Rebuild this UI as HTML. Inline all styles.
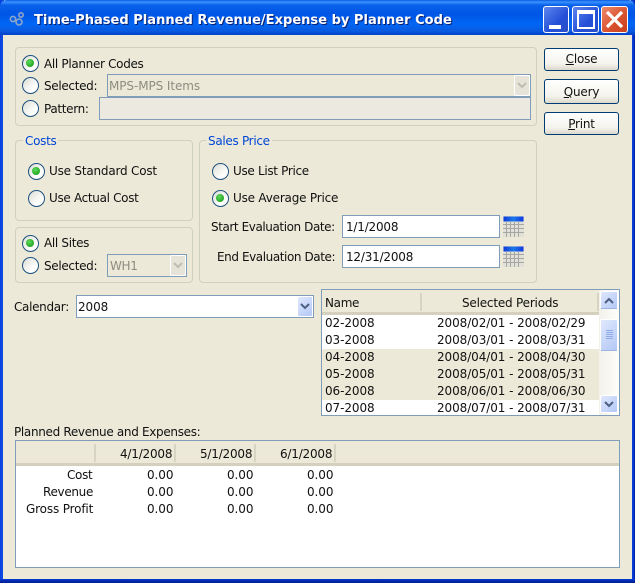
<!DOCTYPE html>
<html><head><meta charset="utf-8">
<style>
html,body{margin:0;padding:0;background:#ece9d8}
#w{position:relative;width:635px;height:583px;overflow:hidden;background:#ece9d8;font:12px "DejaVu Sans",sans-serif;color:#111}
#w *{box-sizing:border-box}
.a,.t,.g,.r,.i,.b{position:absolute}
.t{white-space:pre;line-height:16px;height:16px;font-size:12px;letter-spacing:-.32px;margin-top:1px}
.n{letter-spacing:-.08px}
.u{margin-top:0}
.g{border:1px solid #d0d0bf;border-radius:4px}
.gl{position:absolute;white-space:pre;color:#0046d5;background:#ece9d8;line-height:14px;padding:0 2px;font-size:12px;letter-spacing:-.3px}
.r{width:17px;height:17px;border-radius:50%;border:1.5px solid #1c5180;background:linear-gradient(135deg,#dcdcd4,#fff 70%)}
.r.on::after{content:"";position:absolute;left:3px;top:3px;width:8px;height:8px;border-radius:50%;background:radial-gradient(circle at 40% 35%,#5fd85f,#1ea61e 75%)}
.i{border:1px solid #7f9db9;background:#fff}
.i.d{background:#ebe9e0}
.b{border:1px solid #003c74;border-radius:3px;background:linear-gradient(#fff,#f4f3ec 70%,#dcd8cc);text-align:center;line-height:21px;font-size:12px;letter-spacing:-.2px}
.arr{position:absolute;border-radius:2px;background:linear-gradient(135deg,#dfe8fd,#b4c8f6);border:1px solid #fff}
.grey{color:#8c8c80}
</style></head><body>
<div id="w">
<!-- frame -->
<div class="a" style="left:0;top:0;width:635px;height:583px;background:linear-gradient(90deg,#0a3cd8,#0a50e8 2px,#0a3cd8 4px,transparent 4px,transparent 631px,#0a40dc 631px,#0a3cd8 633px,#0020a0)"></div>
<div class="a" style="left:3px;top:34px;width:629px;height:546px;background:#ece9d8"></div>
<div class="a" style="left:0;top:579px;width:635px;height:4px;background:linear-gradient(#0a40d8,#0030c0 1px,#001c8c)"></div>
<div class="a" style="left:0;top:0;width:635px;height:35px;border-radius:7px 7px 0 0;background:linear-gradient(#0a5ae0,#3a93ff 2px,#0a62ea 5px,#0055e5 14px,#0066f4 24px,#0a5ae0 31px,#0040c8 35px)"></div>
<!-- title icon -->
<svg class="a" style="left:9px;top:12px" width="17" height="15" viewBox="0 0 17 15" fill="none" stroke="#8ea6c8" stroke-width="1.6"><circle cx="4" cy="7" r="2.6"/><circle cx="10" cy="10" r="3"/><circle cx="12" cy="3" r="2.2"/></svg>
<div class="a" style="left:35px;top:14px;white-space:pre;font:bold 13.04px/16px 'DejaVu Sans',sans-serif;color:#0a1f70;">Time-Phased Planned Revenue/Expense by Planner Code</div>
<div class="a" style="left:34px;top:13px;white-space:pre;font:bold 13.04px/16px 'DejaVu Sans',sans-serif;color:#fff;">Time-Phased Planned Revenue/Expense by Planner Code</div>
<!-- window buttons -->
<div class="a" style="left:543px;top:6px;width:26px;height:27px;border:1px solid #fff;border-radius:3px;background:linear-gradient(135deg,#5f86ee,#2350d8 60%,#2a4fc8)"><div class="a" style="left:5px;top:18px;width:12px;height:4px;background:#fff"></div></div>
<div class="a" style="left:572px;top:6px;width:27px;height:27px;border:1px solid #fff;border-radius:3px;background:linear-gradient(135deg,#5f86ee,#2350d8 60%,#2a4fc8)"><div class="a" style="left:4px;top:3px;width:18px;height:19px;border:2px solid #fff;border-top-width:4px"></div></div>
<div class="a" style="left:601px;top:6px;width:27px;height:27px;border:1px solid #fff;border-radius:3px;background:linear-gradient(135deg,#ec8a6a,#d8502c 60%,#c8401c)"><svg class="a" style="left:3px;top:3px" width="19" height="19" viewBox="0 0 19 19"><path d="M2 2L17 17M17 2L2 17" stroke="#fff" stroke-width="3.2"/></svg></div>

<!-- planner group -->
<div class="g" style="left:15px;top:47px;width:522px;height:79px"></div>
<div class="r on" style="left:22px;top:55px"></div><div class="t" style="left:44px;top:55px">All Planner Codes</div>
<div class="r" style="left:22px;top:77px"></div><div class="t" style="left:44px;top:77px">Selected:</div>
<div class="r" style="left:22px;top:100px"></div><div class="t" style="left:44px;top:100px">Pattern:</div>
<div class="i" style="left:107px;top:74px;width:424px;height:23px;background:#ece9d8"></div>
<div class="t grey n" style="left:109px;top:77px">MPS-MPS Items</div>
<div class="arr" style="left:514px;top:75px;width:16px;height:21px;background:#e6e4d8"><svg class="a" style="left:2px;top:6px" width="10" height="7" viewBox="0 0 10 7"><path d="M1 1L5 5L9 1" stroke="#bdbdb2" stroke-width="2" fill="none"/></svg></div>
<div class="i d" style="left:99px;top:97px;width:432px;height:23px"></div>

<!-- buttons -->
<div class="b" style="left:544px;top:48px;width:75px;height:23px"><u>C</u>lose</div>
<div class="b" style="left:544px;top:79px;width:75px;height:25px;line-height:25px"><u>Q</u>uery</div>
<div class="b" style="left:544px;top:112px;width:75px;height:23px;line-height:22px"><u>P</u>rint</div>

<!-- costs -->
<div class="g" style="left:15px;top:140px;width:178px;height:81px"></div>
<div class="gl" style="left:23px;top:134px">Costs</div>
<div class="r on" style="left:28px;top:163px"></div><div class="t u" style="left:49px;top:163px;letter-spacing:-.2px">Use Standard Cost</div>
<div class="r" style="left:28px;top:190px"></div><div class="t u" style="left:49px;top:190px">Use Actual Cost</div>

<!-- sites -->
<div class="g" style="left:15px;top:227px;width:178px;height:56px"></div>
<div class="r on" style="left:22px;top:235px"></div><div class="t u" style="left:44px;top:235px">All Sites</div>
<div class="r" style="left:22px;top:257px"></div><div class="t" style="left:44px;top:257px">Selected:</div>
<div class="i" style="left:107px;top:254px;width:80px;height:23px;background:#ece9d8"></div>
<div class="t grey" style="left:110px;top:257px">WH1</div>
<div class="arr" style="left:170px;top:255px;width:16px;height:21px;background:#e6e4d8"><svg class="a" style="left:2px;top:6px" width="10" height="7" viewBox="0 0 10 7"><path d="M1 1L5 5L9 1" stroke="#bdbdb2" stroke-width="2" fill="none"/></svg></div>

<!-- sales -->
<div class="g" style="left:199px;top:140px;width:338px;height:143px"></div>
<div class="gl" style="left:206px;top:134px">Sales Price</div>
<div class="r" style="left:212px;top:163px"></div><div class="t u" style="left:233px;top:163px">Use List Price</div>
<div class="r on" style="left:212px;top:190px"></div><div class="t u" style="left:233px;top:190px;letter-spacing:-.2px">Use Average Price</div>
<div class="t u" style="left:211px;top:219px;letter-spacing:-.42px">Start Evaluation Date:</div>
<div class="t u" style="left:217px;top:249px;letter-spacing:-.42px">End Evaluation Date:</div>
<div class="i" style="left:342px;top:215px;width:158px;height:23px"></div><div class="t u" style="left:346px;top:219px;letter-spacing:-.2px">1/1/2008</div>
<div class="i" style="left:342px;top:245px;width:158px;height:23px"></div><div class="t u" style="left:346px;top:249px;letter-spacing:-.2px">12/31/2008</div>
<svg class="a" style="left:503px;top:216px" width="21" height="21" viewBox="0 0 21 21"><defs><linearGradient id="cg"><stop offset="0" stop-color="#1038d8"/><stop offset=".5" stop-color="#1c7ae8"/><stop offset="1" stop-color="#1038e0"/></linearGradient></defs><rect width="21" height="21" fill="#e2e1d8"/><rect x="0.5" y="0.5" width="20" height="5" fill="url(#cg)"/><path d="M0 8.5H21M0 12.5H21M0 16.5H21M3.5 6V21M7.5 6V21M11.5 6V21M15.5 6V21" stroke="#a6a6a2" stroke-width="1"/></svg>
<svg class="a" style="left:503px;top:246px" width="21" height="21" viewBox="0 0 21 21"><rect width="21" height="21" fill="#e2e1d8"/><rect x="0.5" y="0.5" width="20" height="5" fill="url(#cg)"/><path d="M0 8.5H21M0 12.5H21M0 16.5H21M3.5 6V21M7.5 6V21M11.5 6V21M15.5 6V21" stroke="#a6a6a2" stroke-width="1"/></svg>

<!-- calendar -->
<div class="t" style="left:14px;top:298px">Calendar:</div>
<div class="i" style="left:76px;top:295px;width:238px;height:23px"></div>
<div class="t n" style="left:78px;top:298px">2008</div>
<div class="arr" style="left:297px;top:296px;width:16px;height:21px"><svg class="a" style="left:2px;top:6px" width="10" height="7" viewBox="0 0 10 7"><path d="M1 1L5 5L9 1" stroke="#4d6185" stroke-width="2" fill="none"/></svg></div>

<!-- list -->
<div class="i" style="left:321px;top:289px;width:299px;height:127px;overflow:hidden">
 <div class="a" style="left:0;top:0;width:277px;height:25px;background:#ece9d8;border-bottom:3px solid #d5d0bd"></div>
 <div class="a" style="left:98px;top:3px;width:2px;height:18px;background:#d8d4c4"></div>
 <div class="a" style="left:275px;top:3px;width:2px;height:18px;background:#d8d4c4"></div>
 <div class="a" style="left:0;top:25px;width:277px;height:34px;background:#fff"></div>
 <div class="a" style="left:0;top:59px;width:277px;height:51px;background:#ece9d8"></div>
 <div class="a" style="left:0;top:110px;width:277px;height:16px;background:#fff"></div>
 <div class="a" style="left:277px;top:0;width:20px;height:125px;background:linear-gradient(90deg,#f2f1ea,#fefefb)"></div>
 <div class="arr" style="left:278px;top:1px;width:18px;height:18px;border-bottom:1px solid #9cb4e0"><svg class="a" style="left:3px;top:5px" width="10" height="7" viewBox="0 0 10 7"><path d="M1 6L5 2L9 6" stroke="#4d6185" stroke-width="2" fill="none"/></svg></div>
 <div class="arr" style="left:278px;top:29px;width:18px;height:32px;border-bottom:1px solid #9cb4e0"><svg class="a" style="left:4px;top:9px" width="9" height="11" viewBox="0 0 9 11"><path d="M1 1.5H8M1 3.5H8M1 5.5H8M1 7.5H8M1 9.5H8" stroke="#8faae6" stroke-width="1"/></svg></div>
 <div class="arr" style="left:278px;top:105px;width:18px;height:18px"><svg class="a" style="left:3px;top:5px" width="10" height="7" viewBox="0 0 10 7"><path d="M1 1L5 5L9 1" stroke="#4d6185" stroke-width="2" fill="none"/></svg></div>
</div>
<div class="t" style="left:325px;top:294px">Name</div>
<div class="t" style="left:462px;top:294px;letter-spacing:-.2px">Selected Periods</div>
<div class="t n u" style="left:325px;top:315px">02-2008</div><div class="t n u" style="left:437px;top:315px">2008/02/01 - 2008/02/29</div>
<div class="t n u" style="left:325px;top:332px">03-2008</div><div class="t n u" style="left:437px;top:332px">2008/03/01 - 2008/03/31</div>
<div class="t n u" style="left:325px;top:349px">04-2008</div><div class="t n u" style="left:437px;top:349px">2008/04/01 - 2008/04/30</div>
<div class="t n u" style="left:325px;top:366px">05-2008</div><div class="t n u" style="left:437px;top:366px">2008/05/01 - 2008/05/31</div>
<div class="t n u" style="left:325px;top:383px">06-2008</div><div class="t n u" style="left:437px;top:383px">2008/06/01 - 2008/06/30</div>
<div class="t n u" style="left:325px;top:400px">07-2008</div><div class="t n u" style="left:437px;top:400px">2008/07/01 - 2008/07/31</div>

<!-- table -->
<div class="t" style="left:14px;top:423px">Planned Revenue and Expenses:</div>
<div class="i" style="left:15px;top:440px;width:605px;height:128px"></div>
<div class="a" style="left:16px;top:441px;width:603px;height:25px;background:#ece9d8;border-bottom:3px solid #d5d0bd"></div>
<div class="a" style="left:94px;top:444px;width:2px;height:18px;background:#d8d4c4"></div>
<div class="a" style="left:174px;top:444px;width:2px;height:18px;background:#d8d4c4"></div>
<div class="a" style="left:254px;top:444px;width:2px;height:18px;background:#d8d4c4"></div>
<div class="a" style="left:334px;top:444px;width:2px;height:18px;background:#d8d4c4"></div>
<div class="t" style="left:120px;top:445px;letter-spacing:-.2px">4/1/2008</div>
<div class="t" style="left:200px;top:445px;letter-spacing:-.2px">5/1/2008</div>
<div class="t" style="left:280px;top:445px;letter-spacing:-.2px">6/1/2008</div>
<div class="t u" style="left:67px;top:467px">Cost</div>
<div class="t u" style="left:43px;top:484px">Revenue</div>
<div class="t u" style="left:26px;top:501px;letter-spacing:-.15px">Gross Profit</div>
<div class="t n u" style="left:147px;top:467px">0.00</div><div class="t n u" style="left:227px;top:467px">0.00</div><div class="t n u" style="left:307px;top:467px">0.00</div>
<div class="t n u" style="left:147px;top:484px">0.00</div><div class="t n u" style="left:227px;top:484px">0.00</div><div class="t n u" style="left:307px;top:484px">0.00</div>
<div class="t n u" style="left:147px;top:501px">0.00</div><div class="t n u" style="left:227px;top:501px">0.00</div><div class="t n u" style="left:307px;top:501px">0.00</div>
</div>
</body></html>
